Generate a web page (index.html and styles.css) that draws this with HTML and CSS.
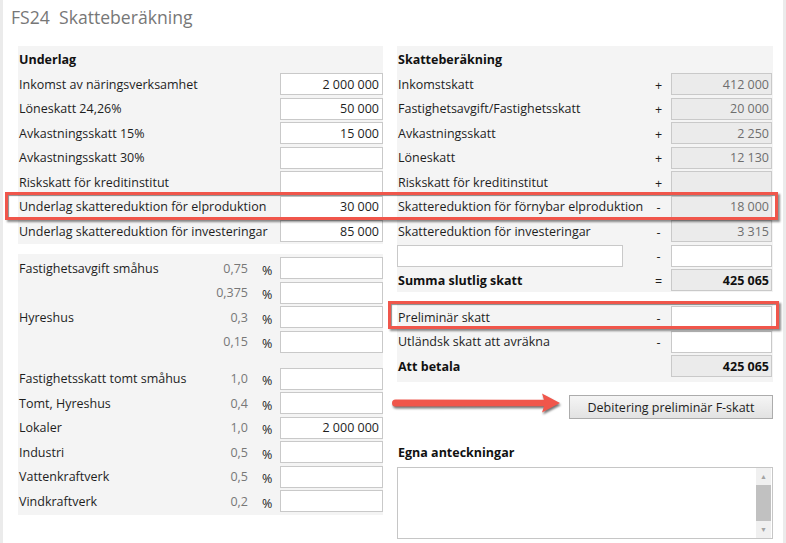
FILE: index.html
```html
<!DOCTYPE html>
<html lang="sv">
<head>
   <meta charset="UTF-8">
   <meta name="viewport" content="width=device-width, initial-scale=1.0">
   <title>FS24 Skatteberäkning</title>
   <link rel="stylesheet" href="styles.css">
</head>
<body>

<div class="page">
   <h1 class="title">FS24&nbsp; Skatteberäkning</h1>

   <div class="columns">
       <div class="col">
           <section class="panel panel-head">
               <h2 class="panel-title">Underlag</h2>
               <div class="row"><span class="label">Inkomst av näringsverksamhet</span><input class="field" value="2 000 000"></div>
               <div class="row"><span class="label">Löneskatt 24,26%</span><input class="field" value="50 000"></div>
               <div class="row"><span class="label">Avkastningsskatt 15%</span><input class="field" value="15 000"></div>
               <div class="row"><span class="label">Avkastningsskatt 30%</span><input class="field"></div>
               <div class="row"><span class="label">Riskskatt för kreditinstitut</span><input class="field"></div>
               <div class="row"><span class="label">Underlag skattereduktion för elproduktion</span><input class="field" value="30 000"></div>
               <div class="row"><span class="label">Underlag skattereduktion för investeringar</span><input class="field" value="85 000"></div>
           </section>

           <section class="panel panel-rates">
               <div class="row"><span class="label">Fastighetsavgift småhus</span><span class="rate">0,75</span><span class="pct">%</span><input class="field"></div>
               <div class="row"><span class="label"></span><span class="rate">0,375</span><span class="pct">%</span><input class="field"></div>
               <div class="row"><span class="label">Hyreshus</span><span class="rate">0,3</span><span class="pct">%</span><input class="field"></div>
               <div class="row"><span class="label"></span><span class="rate">0,15</span><span class="pct">%</span><input class="field"></div>
               <div class="spacer"></div>
               <div class="row"><span class="label">Fastighetsskatt tomt småhus</span><span class="rate">1,0</span><span class="pct">%</span><input class="field"></div>
               <div class="row"><span class="label">Tomt, Hyreshus</span><span class="rate">0,4</span><span class="pct">%</span><input class="field"></div>
               <div class="row"><span class="label">Lokaler</span><span class="rate">1,0</span><span class="pct">%</span><input class="field" value="2 000 000"></div>
               <div class="row"><span class="label">Industri</span><span class="rate">0,5</span><span class="pct">%</span><input class="field"></div>
               <div class="row"><span class="label">Vattenkraftverk</span><span class="rate">0,5</span><span class="pct">%</span><input class="field"></div>
               <div class="row"><span class="label">Vindkraftverk</span><span class="rate">0,2</span><span class="pct">%</span><input class="field"></div>
           </section>
       </div>

       <div class="col">
           <section class="panel panel-head panel-calc">
               <h2 class="panel-title">Skatteberäkning</h2>
               <div class="row"><span class="label">Inkomstskatt</span><span class="sign">+</span><input class="field locked" readonly value="412 000"></div>
               <div class="row"><span class="label">Fastighetsavgift/Fastighetsskatt</span><span class="sign">+</span><input class="field locked" readonly value="20 000"></div>
               <div class="row"><span class="label">Avkastningsskatt</span><span class="sign">+</span><input class="field locked" readonly value="2 250"></div>
               <div class="row"><span class="label">Löneskatt</span><span class="sign">+</span><input class="field locked" readonly value="12 130"></div>
               <div class="row"><span class="label">Riskskatt för kreditinstitut</span><span class="sign">+</span><input class="field locked" readonly></div>
               <div class="row"><span class="label">Skattereduktion för förnybar elproduktion</span><span class="sign">-</span><input class="field locked" readonly value="18 000"></div>
               <div class="row"><span class="label">Skattereduktion för investeringar</span><span class="sign">-</span><input class="field locked" readonly value="3 315"></div>
               <div class="row"><span class="label"><input class="text-field"></span><span class="sign">-</span><input class="field"></div>
               <div class="row total"><span class="label">Summa slutlig skatt</span><span class="sign">=</span><input class="field locked" readonly value="425 065"></div>
           </section>

           <section class="panel panel-calc panel-pay">
               <div class="row"><span class="label">Preliminär skatt</span><span class="sign">-</span><input class="field"></div>
               <div class="row"><span class="label">Utländsk skatt att avräkna</span><span class="sign">-</span><input class="field"></div>
               <div class="row total"><span class="label">Att betala</span><span class="sign"></span><input class="field locked" readonly value="425 065"></div>
           </section>

           <div class="actions">
               <button type="button" class="debit-btn">Debitering preliminär F-skatt</button>
           </div>

           <h2 class="notes-title">Egna anteckningar</h2>
           <div class="notes">
               <div class="notes-text"></div>
               <div class="scrollbar">
                   <span class="scroll-arrow">&#9650;</span>
                   <span class="scroll-thumb"></span>
                   <span class="scroll-arrow">&#9660;</span>
               </div>
           </div>
       </div>
   </div>

   <!-- annotations -->
   <div class="callout callout-el"></div>
   <div class="callout callout-prel"></div>
   <svg class="arrow" width="180" height="28" viewBox="0 0 180 28">
       <path d="M4 12 a3.5 3.5 0 0 1 3.5 -3.5 L156 8.8 L154 2.5 L172 12 L154 21.5 L156 15.2 L7.5 15.5 a3.5 3.5 0 0 1 -3.5 -3.5 Z" fill="#f0564b"/>
   </svg>
</div>

</body>
</html>
```

FILE: styles.css
```css
body {
    margin: 0;
    background-color: #fff;
    font-family: "Open Sans", "Noto Sans", sans-serif;
    font-size: 12.5px;
    color: #1e1e1e;
}
.page {
    position: relative;
    width: 780px;
    height: 543px;
    border-left: 3px solid #ebebeb;
    border-right: 3px solid #ebebeb;
}
.title {
    margin: 0;
    height: 46px;
    padding: 5px 0 0 8px;
    box-sizing: border-box;
    font-size: 17.6px;
    font-weight: normal;
    line-height: 24px;
    color: #777;
}
.columns {
    display: grid;
    grid-template-columns: 365px 376px;
    column-gap: 14px;
    margin-left: 15px;
}
.col {
    display: flex;
    flex-direction: column;
    gap: 10px;
}
.panel {
    display: flex;
    flex-direction: column;
    gap: 2.5px;
    background-color: #f4f4f4;
    padding: 0 0 2px 1px;
}
.panel-rates {
    padding-top: 3px;
    padding-bottom: 3px;
}
.panel-calc {
    padding-right: 1px;
    padding-bottom: 1px;
}
.panel-pay {
    padding-top: 4px;
    padding-bottom: 5px;
}
.panel-title {
    margin: 0;
    height: 24.5px;
    padding-top: 3px;
    box-sizing: border-box;
    font-size: 12.5px;
    font-weight: bold;
    line-height: 21px;
    color: #111;
}
.row {
    display: flex;
    align-items: center;
    height: 22px;
}
.label {
    flex: 1;
    white-space: nowrap;
}
.field {
    width: 103px;
    height: 22px;
    box-sizing: border-box;
    border: 1px solid #c9c9c9;
    background-color: #fff;
    padding: 0 3px 0 2px;
    font-family: inherit;
    font-size: 12.5px;
    color: #1e1e1e;
    text-align: right;
}
.panel-calc .field {
    width: 101px;
    padding-right: 2px;
}
.field.locked {
    background-color: #ebebeb;
    color: #6e6e6e;
}
.text-field {
    display: block;
    width: 226px;
    height: 22px;
    box-sizing: border-box;
    border: 1px solid #c9c9c9;
    background-color: #fff;
    margin-left: -1px;
}
.rate {
    color: #777;
}
.pct {
    width: 32px;
    padding: 4px 0 0 14px;
    box-sizing: border-box;
}
.sign {
    width: 25px;
    text-align: center;
    padding-top: 2px;
}
.total .label,
.total .field {
    font-weight: bold;
    color: #111;
}
.spacer {
    height: 10px;
}
.actions {
    display: flex;
    justify-content: flex-end;
    margin-top: 3px;
}
.debit-btn {
    width: 204px;
    height: 24px;
    border: 1px solid #acacac;
    background: linear-gradient(#f5f5f5, #e2e2e2);
    font-family: inherit;
    font-size: 12.5px;
    color: #1e1e1e;
    padding: 0;
}
.notes-title {
    margin: 14px 0 0 1px;
    font-size: 12.5px;
    font-weight: bold;
    line-height: 20px;
    color: #111;
}
.notes {
    display: flex;
    height: 72px;
    margin-top: -6px;
    border: 1px solid #c6c6c6;
    background-color: #fff;
    box-sizing: border-box;
    width: 376px;
}
.notes-text {
    flex: 1;
}
.scrollbar {
    width: 15px;
    margin-right: 1px;
    display: flex;
    flex-direction: column;
    align-items: center;
    background-color: #f0f0f0;
}
.scroll-arrow {
    font-size: 7px;
    line-height: 17px;
    color: #a3a3a3;
}
.scroll-thumb {
    flex: 1;
    width: 100%;
    background-color: #c1c1c1;
}
.callout {
    position: absolute;
    border: 3px solid #f0564b;
    box-shadow: 2px 2px 2px rgba(0, 0, 0, 0.45), inset 1px 1px 1px rgba(0, 0, 0, 0.45);
}
.callout-el {
    left: 2px;
    top: 192px;
    width: 767px;
    height: 22px;
}
.callout-prel {
    left: 385px;
    top: 301px;
    width: 385px;
    height: 22px;
}
.arrow {
    position: absolute;
    left: 385px;
    top: 391px;
    filter: drop-shadow(1px 2px 1px rgba(0, 0, 0, 0.55));
}
```
